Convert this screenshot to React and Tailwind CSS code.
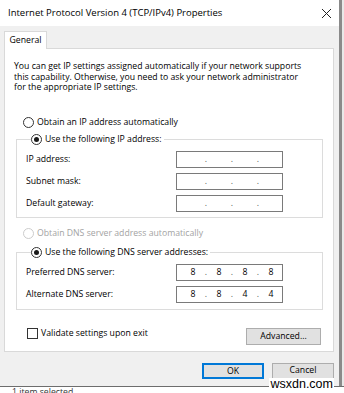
import React from 'react';

const font = { fontFamily: '"Open Sans", "Noto Sans", sans-serif' };

const Radio = ({ checked, disabled, label }) => (
  <div className="flex items-center gap-[3px]">
    <span
      className={`flex h-[11px] w-[11px] items-center justify-center rounded-full border bg-white ${
        disabled ? 'border-[#cccccc]' : 'border-[#333333]'
      }`}
    >
      {checked && <span className="h-[5px] w-[5px] rounded-full bg-[#1a1a1a]" />}
    </span>
    <span className={disabled ? 'text-[#a3a3a3]' : 'text-black'}>{label}</span>
  </div>
);

const IpField = ({ parts }) => (
  <div className="flex h-[17px] w-[107px] items-center border border-[#7a7a7a] bg-white pl-[5px]">
    {[0, 1, 2, 3].map(i => (
      <React.Fragment key={i}>
        <span className="w-[22px] text-center">{parts ? parts[i] : ''}</span>
        {i < 3 && <span className="w-[4px] text-center text-[#555]">.</span>}
      </React.Fragment>
    ))}
  </div>
);

const FieldRow = ({ label, parts }) => (
  <div className="flex items-center justify-between">
    <span>{label}</span>
    <IpField parts={parts} />
  </div>
);

const App = () => {
  return (
    <div
      className="relative flex h-[393px] w-[344px] flex-col overflow-hidden bg-[#f0f0f0] text-[8.7px] text-black"
      style={font}
    >
      <div className="flex flex-1">
        <div className="flex w-[339px] flex-col">
          <div className="flex h-[26px] items-center justify-between bg-white pl-[8px] pr-[6px]">
            <span className="text-[9.5px]">Internet Protocol Version 4 (TCP/IPv4) Properties</span>
            <svg width="11" height="11" viewBox="0 0 11 11" className="mr-[1px]">
              <path d="M1 1 L10 10 M10 1 L1 10" stroke="#222" strokeWidth="1" />
            </svg>
          </div>

          <div className="px-[4px] pt-[5px]">
            <div className="relative z-10 -mb-px flex h-[18px] w-[43px] items-center justify-center border border-b-0 border-[#d9d9d9] bg-white">
              General
            </div>
            <div className="h-[304px] w-[330px] border border-[#d9d9d9] bg-white pl-[9px] pr-[9px] pt-[12px]">
              <p className="leading-[10.5px]">
                You can get IP settings assigned automatically if your network supports
                <br />
                this capability. Otherwise, you need to ask your network administrator
                <br />
                for the appropriate IP settings.
              </p>

              <div className="mt-[23px] pl-[9px]">
                <Radio label="Obtain an IP address automatically" />
              </div>

              <fieldset className="ml-[2px] mr-[1px] mt-[4px] border border-[#dcdcdc] pb-[5px] pl-[9px] pr-[39px]">
                <legend className="ml-[5px] pr-[2px]">
                  <Radio checked label="Use the following IP address:" />
                </legend>
                <div className="mt-[5px] flex flex-col gap-[5px]">
                  <FieldRow label="IP address:" />
                  <FieldRow label="Subnet mask:" />
                  <FieldRow label="Default gateway:" />
                </div>
              </fieldset>

              <div className="mt-[9px] pl-[9px]">
                <Radio disabled label="Obtain DNS server address automatically" />
              </div>

              <fieldset className="ml-[2px] mr-[1px] mt-[6px] border border-[#dcdcdc] pb-[6px] pl-[9px] pr-[39px]">
                <legend className="ml-[5px] pr-[2px]">
                  <Radio checked label="Use the following DNS server addresses:" />
                </legend>
                <div className="mt-[5px] flex flex-col gap-[5px]">
                  <FieldRow label="Preferred DNS server:" parts={['8', '8', '8', '8']} />
                  <FieldRow label="Alternate DNS server:" parts={['8', '8', '4', '4']} />
                </div>
              </fieldset>

              <div className="mt-[13px] flex items-center justify-between pl-[13px] pr-[3px]">
                <div className="flex items-center gap-[3px]">
                  <span className="h-[11px] w-[11px] border border-[#333333] bg-white" />
                  <span>Validate settings upon exit</span>
                </div>
                <button className="mt-[5px] h-[17px] w-[75px] border border-[#adadad] bg-[#e1e1e1]">
                  Advanced...
                </button>
              </div>
            </div>

            <div className="mt-[11px] flex justify-end gap-[8px] pr-[1px]">
              <button className="h-[16px] w-[62px] border-2 border-[#0078d7] bg-[#e1e1e1]">OK</button>
              <button className="h-[16px] w-[62px] border border-[#adadad] bg-[#e1e1e1]">Cancel</button>
            </div>
          </div>
        </div>
        <div className="w-[3px] bg-[#8a8a8a]" />
        <div className="w-[2px] bg-[#e8e8e8]" />
      </div>

      <div className="h-[7px] border-t border-[#6d6d6d] bg-white pl-[12px] leading-[11px] text-[#333]">
        1 item selected
      </div>

      <div className="absolute bottom-[2px] right-[10px] bg-white px-[1px] text-[12.5px] leading-[13px] text-black" style={{ fontFamily: '"Liberation Sans", Arial, sans-serif' }}>
        wsxdn.com
      </div>
    </div>
  );
};

export default App;
